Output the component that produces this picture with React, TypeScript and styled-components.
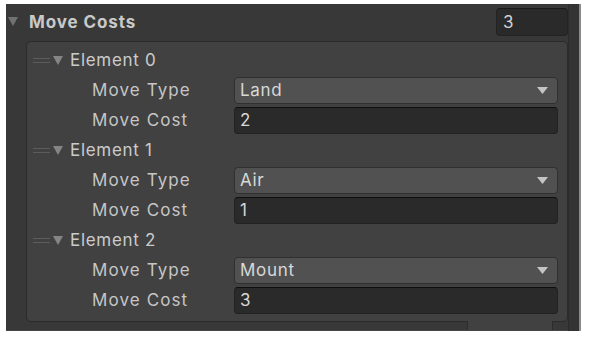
import React from 'react'
import styled, { createGlobalStyle } from 'styled-components'

type Entry = { moveType: string; moveCost: string }

const entries: Entry[] = [
  { moveType: 'Land', moveCost: '2' },
  { moveType: 'Air', moveCost: '1' },
  { moveType: 'Mount', moveCost: '3' },
]

const GlobalStyle = createGlobalStyle`
  html, body {
    margin: 0;
    padding: 0;
    background: #ffffff;
  }
  body {
    font-family: Inter, "Noto Sans", sans-serif;
  }
`

const App = () => {
  return (
    <>
      <GlobalStyle />
      <Frame>
        <Panel>
          <Header>
            <Foldout size={10} color="#727272" />
            <HeaderTitle>Move Costs</HeaderTitle>
            <CountField>3</CountField>
          </Header>
          <ListBox>
            {entries.map((entry, i) => (
              <React.Fragment key={i}>
                <ElementRow>
                  <Handle />
                  <Foldout size={10} color="#858585" />
                  <ElementName>Element {i}</ElementName>
                </ElementRow>
                <PropRow>
                  <Label>Move Type</Label>
                  <Dropdown>
                    <span>{entry.moveType}</span>
                    <DropArrow />
                  </Dropdown>
                </PropRow>
                <PropRow>
                  <Label>Move Cost</Label>
                  <TextField>{entry.moveCost}</TextField>
                </PropRow>
              </React.Fragment>
            ))}
          </ListBox>
          <Footer>
            <FooterButton>+</FooterButton>
            <FooterButton>−</FooterButton>
          </Footer>
        </Panel>
        <ScrollTrack />
        <Edge />
      </Frame>
    </>
  )
}

const Foldout = ({ size, color }: { size: number; color: string }) => (
  <svg width={size} height={size - 1} viewBox="0 0 10 9">
    <path d="M0 0 L10 0 L5 9 Z" fill={color} />
  </svg>
)

const DropArrow = () => (
  <svg width="11" height="7" viewBox="0 0 11 7">
    <path d="M0 0 L11 0 L5.5 7 Z" fill="#c4c4c4" />
  </svg>
)

const Frame = styled.div`
  display: flex;
  margin: 4px 0 0 6px;
  width: 575px;
  height: 327px;
  overflow: hidden;
`

const Panel = styled.div`
  flex: 1;
  display: flex;
  flex-direction: column;
  background: #383838;
  border-bottom: 1px solid #464646;
  overflow: hidden;
`

const Header = styled.div`
  display: flex;
  align-items: center;
  height: 33px;
  padding-left: 2px;
  padding-top: 1px;
  flex-shrink: 0;
`

const HeaderTitle = styled.div`
  margin-left: 11px;
  font-size: 17px;
  font-weight: 700;
  letter-spacing: 0.9px;
  color: #c9c9c9;
`

const CountField = styled.div`
  margin-left: auto;
  width: 64px;
  height: 26px;
  padding-left: 6px;
  background: #2a2a2a;
  border: 1px solid #232323;
  border-top-color: #1a1a1a;
  border-radius: 4px;
  color: #d2d2d2;
  font-size: 17px;
  line-height: 26px;
`

const ListBox = styled.div`
  margin: 3px 0 0 20px;
  padding: 3px 9px 6px 6px;
  background: #414141;
  border: 1px solid #2b2b2b;
  border-radius: 5px;
  flex-shrink: 0;
  position: relative;
`

const ElementRow = styled.div`
  display: flex;
  align-items: center;
  height: 30px;
`

const Handle = styled.div`
  width: 17px;
  height: 5px;
  margin-right: 3px;
  border-top: 1px solid #5c5c5c;
  border-bottom: 1px solid #5c5c5c;
  box-sizing: border-box;
`

const ElementName = styled.div`
  margin-left: 7px;
  font-size: 17px;
  letter-spacing: 0.7px;
  color: #cbcbcb;
`

const PropRow = styled.div`
  display: flex;
  align-items: center;
  height: 30px;
`

const Label = styled.div`
  width: 201px;
  padding-left: 59px;
  box-sizing: border-box;
  flex-shrink: 0;
  white-space: nowrap;
  font-size: 17px;
  letter-spacing: 1.1px;
  color: #c6c6c6;
`

const Dropdown = styled.div`
  flex: 1;
  display: flex;
  align-items: center;
  justify-content: space-between;
  height: 25px;
  padding: 0 9px 0 5px;
  background: #515151;
  border: 1px solid #303030;
  border-radius: 4px;
  color: #d8d8d8;
  font-size: 17px;
  letter-spacing: 0.7px;
`

const TextField = styled.div`
  flex: 1;
  height: 25px;
  padding-left: 5px;
  background: #2a2a2a;
  border: 1px solid #222222;
  border-top-color: #0f0f0f;
  border-radius: 4px;
  color: #d8d8d8;
  font-size: 17px;
  line-height: 25px;
`

const Footer = styled.div`
  display: flex;
  justify-content: space-around;
  align-self: flex-end;
  width: 84px;
  height: 22px;
  margin: -1px 15px 0 0;
  background: #414141;
  border: 1px solid #2b2b2b;
  border-top: none;
  flex-shrink: 0;
  position: relative;
  z-index: 1;
`

const FooterButton = styled.div`
  font-size: 22px;
  line-height: 22px;
  color: #c4c4c4;
  padding-top: 3px;
`

const ScrollTrack = styled.div`
  width: 10px;
  background: #343434;
  border-left: 1px solid #2c2c2c;
`

const Edge = styled.div`
  width: 2px;
  background: #8a8a8a;
`

export default App
